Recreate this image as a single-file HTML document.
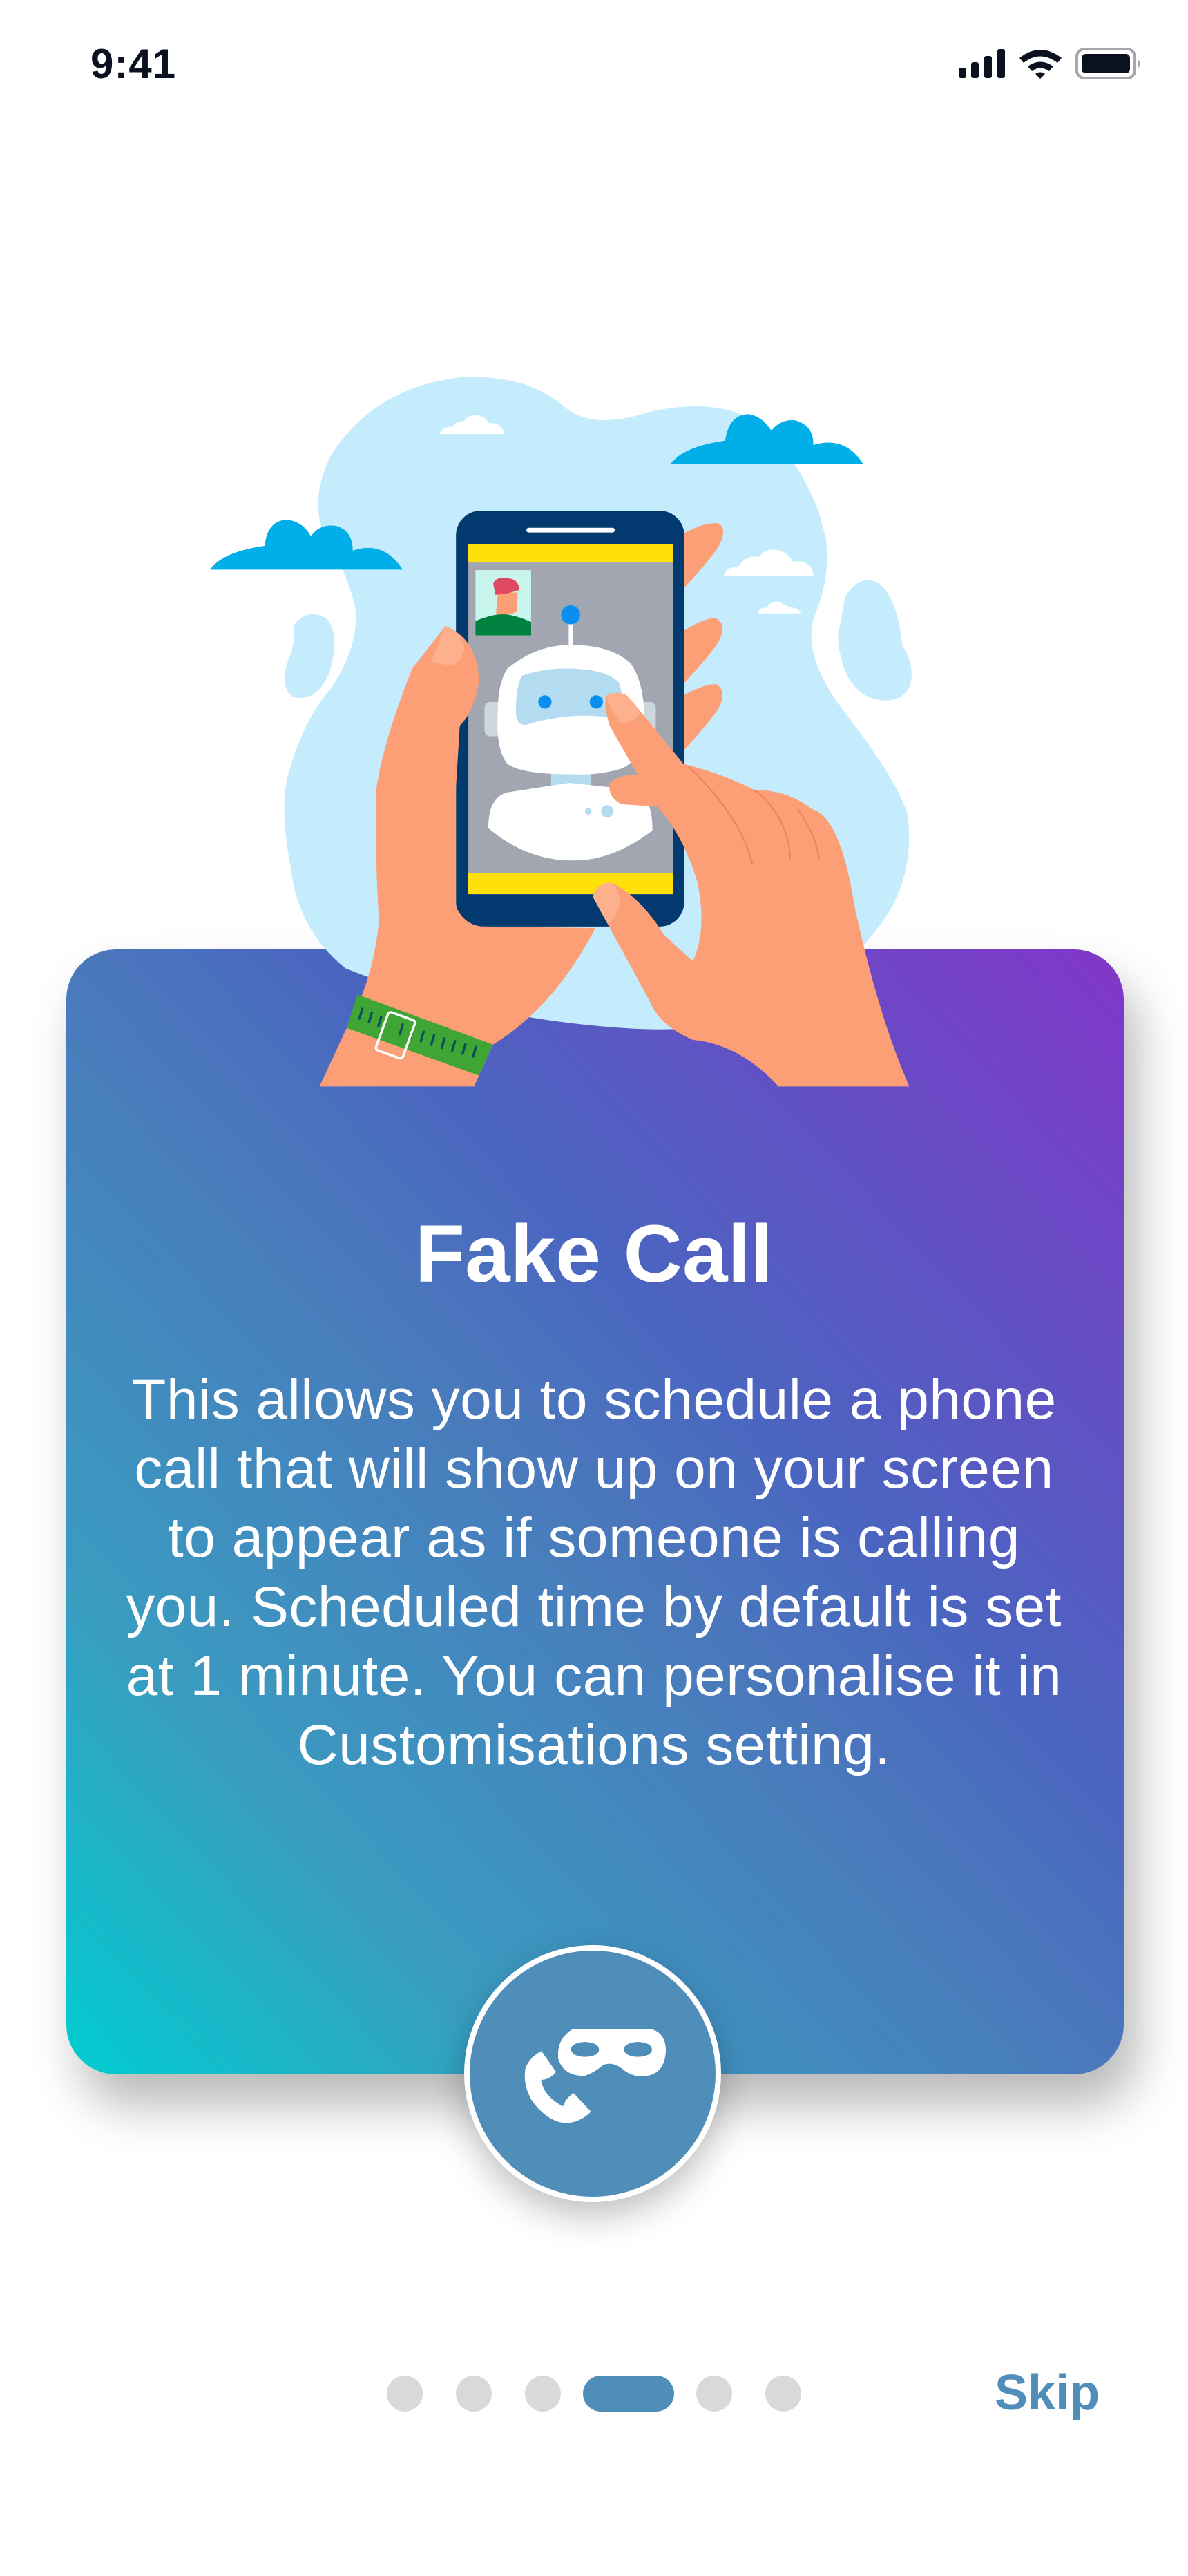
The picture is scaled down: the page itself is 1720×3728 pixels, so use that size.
<!DOCTYPE html>
<html><head><meta charset="utf-8">
<style>
*{margin:0;padding:0;box-sizing:border-box}
html,body{width:1720px;height:3728px;background:#fff;overflow:hidden}
body{position:relative;font-family:"Liberation Sans",sans-serif}
.time{position:absolute;left:131px;top:58px;font-size:60px;font-weight:bold;color:#0b111e;letter-spacing:1px}
.card{position:absolute;left:96px;top:1374px;width:1531px;height:1628px;border-radius:72px;
background:linear-gradient(to top right,#00cdd0 0%,#3a9cc0 22%,#4a78bc 50%,#4a65c0 62%,#8236c9 100%);
box-shadow:20px 45px 70px rgba(0,0,0,.28)}
.title{position:absolute;left:0;width:1720px;top:1750px;text-align:center;color:#fff;font-size:118px;font-weight:bold;line-height:130px}
.body{position:absolute;left:0;width:1720px;top:1976px;text-align:center;color:#fff;font-size:82px;letter-spacing:0.5px;line-height:100px}
.circ{position:absolute;left:672px;top:2815px;width:372px;height:372px;border-radius:50%;background:#4f8eb9;border:8px solid #fff;box-shadow:0 20px 50px rgba(0,0,0,.25)}
.dot{position:absolute;top:3438px;width:52px;height:52px;border-radius:26px;background:#d9d9d9}
.skip{position:absolute;left:1440px;top:3422px;font-size:72px;font-weight:bold;color:#4f8eb9}
</style></head><body>
<div class="time">9:41</div>
<svg style="position:absolute;left:0;top:0" width="1720" height="150">
<rect x="1388" y="98" width="11" height="15" rx="3" fill="#0b111e"/>
<rect x="1406" y="90" width="11" height="23" rx="3" fill="#0b111e"/>
<rect x="1425" y="81" width="11" height="32" rx="3" fill="#0b111e"/>
<rect x="1444" y="71" width="11" height="42" rx="3" fill="#0b111e"/>
<path d="M1476 84 Q1506 60 1537 84 L1531 91 Q1506 72 1482 91Z M1488 96 Q1506 83 1525 96 L1519 103 Q1506 94 1494 103Z M1499 107 Q1506 102 1513 107 L1506 114Z" fill="#0b111e"/>
<rect x="1559" y="71" width="84" height="42" rx="11" fill="none" stroke="#a6a6ab" stroke-width="4"/>
<rect x="1566" y="78" width="70" height="28" rx="6" fill="#0b111e"/>
<path d="M1647 86 Q1655 92 1647 99Z" fill="#a6a6ab"/>
</svg>
<div class="card"></div>
<svg style="position:absolute;left:0;top:0" width="1720" height="1700">
<g transform="translate(280,520) scale(0.6887)">
<path d="M320,1280 Q220,1200 205,1070 Q180,940 200,870 Q230,760 290,690 Q350,600 340,520 Q320,440 280,380 Q240,300 290,200 Q380,60 560,38 Q700,30 780,100 Q840,150 960,110 Q1100,80 1180,130 Q1300,230 1330,380 Q1340,460 1305,540 Q1280,620 1360,730 Q1470,870 1500,950 Q1520,1080 1450,1180 Q1370,1290 1250,1360 Q1100,1420 900,1405 Q760,1395 640,1370 Q470,1340 320,1280Z" fill="#c5ecfc"/>
<path d="M210,560 Q240,520 280,545 Q310,580 285,660 Q260,720 210,710 Q180,690 200,630 Q215,600 210,560Z" fill="#c5ecfc"/>
<path d="M1370,500 Q1400,450 1440,470 Q1480,500 1490,600 Q1520,650 1505,690 Q1480,730 1420,710 Q1360,680 1355,580Z" fill="#c5ecfc"/>
<path d="M35,442 Q60,405 150,392 Q155,340 195,337 Q230,340 247,372 Q265,345 300,350 Q335,360 335,402 Q400,380 440,442Z" fill="#00aee8"/>
<path d="M1003,220 Q1030,183 1118,171 Q1125,118 1165,115 Q1195,118 1215,150 Q1235,125 1265,128 Q1305,140 1303,180 Q1370,160 1408,220Z" fill="#00aee8"/>
<path d="M517,157 Q525,140 545,142 Q550,130 568,130 Q580,115 600,118 Q615,122 620,134 Q650,132 653,157Z" fill="#fff"/>
<path d="M1115,455 Q1120,435 1145,437 Q1160,410 1190,415 Q1200,398 1225,400 Q1250,405 1260,425 Q1300,420 1304,455Z" fill="#fff"/>
<path d="M1187,534 Q1190,520 1205,522 Q1215,505 1235,510 Q1245,518 1255,522 Q1270,520 1278,534Z" fill="#fff"/>
<path d="M1032,365 Q1080,340 1105,345 Q1125,360 1100,400 Q1070,440 1032,480Z M1032,570 Q1080,540 1100,545 Q1125,560 1100,600 Q1070,640 1032,680Z M1032,705 Q1080,680 1100,683 Q1125,700 1100,740 Q1070,780 1032,820Z" fill="#fd9f76"/>
<rect x="552" y="318" width="480" height="874" rx="52" fill="#023a6f"/>
<rect x="700" y="354" width="186" height="10" rx="5" fill="#fff"/>
<rect x="578" y="388" width="430" height="736" fill="#a1a6b0"/>
<rect x="578" y="388" width="430" height="39" fill="#ffe00b"/>
<rect x="578" y="1080" width="430" height="44" fill="#ffe00b"/>
<rect x="593" y="443" width="117" height="137" fill="#c8f5ec"/>
<path d="M593,550 Q620,538 650,535 Q680,538 710,552 L710,580 L593,580Z" fill="#00813f"/>
<path d="M640,490 L682,490 L680,530 L668,536 L636,536Z" fill="#fd9f76"/>
<path d="M630,470 Q640,455 660,460 Q685,462 685,485 L660,492 L635,495Z" fill="#e04a61"/>
<rect x="612" y="720" width="40" height="72" rx="12" fill="#cdd8de"/>
<rect x="935" y="720" width="37" height="72" rx="12" fill="#cdd8de"/>
<rect x="789" y="550" width="9" height="55" fill="#fff"/>
<circle cx="793" cy="537" r="20" fill="#0a8ff0"/>
<rect x="752" y="860" width="83" height="40" fill="#b3dcf0"/>
<path d="M660,650 Q720,600 793,600 Q880,600 920,640 Q948,680 948,760 Q948,840 900,860 Q850,875 793,872 Q690,872 660,850 Q635,820 640,740 Q640,680 660,650Z" fill="#fff"/>
<path d="M690,665 Q740,648 793,650 Q870,652 895,680 Q905,710 905,760 Q850,745 793,750 Q740,755 700,768 Q678,770 678,740 Q678,690 690,665Z" fill="#b3dcf0"/>
<circle cx="739" cy="720" r="14" fill="#0a8ff0"/>
<circle cx="847" cy="720" r="14" fill="#0a8ff0"/>
<path d="M620,985 Q620,920 660,910 L790,890 L930,905 Q965,920 965,990 Q880,1055 795,1053 Q700,1053 620,985Z" fill="#fff"/>
<circle cx="830" cy="950" r="7" fill="#b3dcf0"/>
<circle cx="870" cy="950" r="13" fill="#b3dcf0"/>
<path d="M265,1528 L320,1410 Q380,1300 390,1180 Q380,1000 385,900 Q400,800 460,650 L530,560 Q600,590 600,680 Q590,740 560,770 L552,900 L552,1150 Q570,1190 610,1192 L845,1195 Q760,1360 630,1440 L590,1528Z" fill="#fd9f76"/>
<path d="M500,635 L530,560 Q565,575 570,610 Q555,650 530,642Z" fill="#fdb08c"/>
<path d="M345,1335 L630,1440 L600,1505 L322,1405Z" fill="#3fa535"/>
<g stroke="#0b4f5a" stroke-width="5" stroke-linecap="round">
<path d="M355,1365 L349,1385 M375,1373 L369,1393 M395,1381 L389,1401 M440,1398 L434,1418 M462,1406 L456,1426 M484,1413 L478,1433 M506,1420 L500,1440 M528,1427 L522,1447 M550,1433 L544,1453 M572,1439 L566,1459 M594,1445 L588,1465"/>
</g>
<rect x="395" y="1378" width="60" height="85" rx="6" fill="none" stroke="#fff" stroke-width="5" transform="rotate(20 425 1420)"/>
<path d="M1505,1528 L1230,1528 Q1150,1440 1050,1430 Q980,1400 960,1350 L840,1130 Q845,1100 880,1100 Q940,1130 990,1210 L1050,1265 Q1080,1200 1060,1100 Q1030,1000 975,940 L900,935 Q870,920 875,890 Q900,870 935,875 L875,770 Q860,720 870,705 Q900,695 915,710 L1030,850 Q1110,870 1180,905 Q1250,905 1300,945 Q1360,960 1390,1150 Q1440,1380 1505,1528Z" fill="#fd9f76"/>
<path d="M870,705 Q900,695 915,710 L940,745 Q920,765 900,765 Q870,730 870,705Z" fill="#fdb08c"/>
<path d="M840,1130 Q845,1100 880,1100 Q900,1120 895,1150 Q885,1180 870,1185Z" fill="#fdb08c"/>
<path d="M1040,855 Q1150,960 1175,1060 M1180,905 Q1250,960 1255,1050 M1270,945 Q1310,1000 1315,1050" fill="none" stroke="#f0805a" stroke-width="3"/>
</g>
</svg>
<div class="title">Fake Call</div>
<div class="body">This allows you to schedule a phone<br>call that will show up on your screen<br>to appear as if someone is calling<br>you. Scheduled time by default is set<br>at 1 minute. You can personalise it in<br>Customisations setting.</div>
<div class="circ"></div>
<svg style="position:absolute;left:660px;top:2800px" width="400" height="400" viewBox="0 0 1200 1200">
<path d="M510,408 L840,408 Q910,420 912,500 Q910,610 810,615 Q760,615 720,580 Q680,550 640,565 Q600,600 560,612 Q470,615 445,540 Q435,450 510,408Z M560,465 Q500,470 500,498 Q505,528 560,530 Q620,528 622,498 Q620,468 560,465Z M790,465 Q730,470 730,498 Q735,528 790,530 Q850,528 852,498 Q850,468 790,465Z" fill="#fff" fill-rule="evenodd"/>
<path d="M372,505 L435,595 Q410,628 370,630 Q380,700 465,745 Q480,705 512,688 L587,768 Q540,815 480,818 Q400,815 330,720 Q290,650 302,580 Q320,530 372,505Z" fill="#fff"/>
</svg>
<div class="dot" style="left:560px"></div>
<div class="dot" style="left:660px"></div>
<div class="dot" style="left:760px"></div>
<div class="dot" style="left:844px;width:132px;background:#4f8eb9"></div>
<div class="dot" style="left:1008px"></div>
<div class="dot" style="left:1108px"></div>
<div class="skip">Skip</div>
</body></html>
